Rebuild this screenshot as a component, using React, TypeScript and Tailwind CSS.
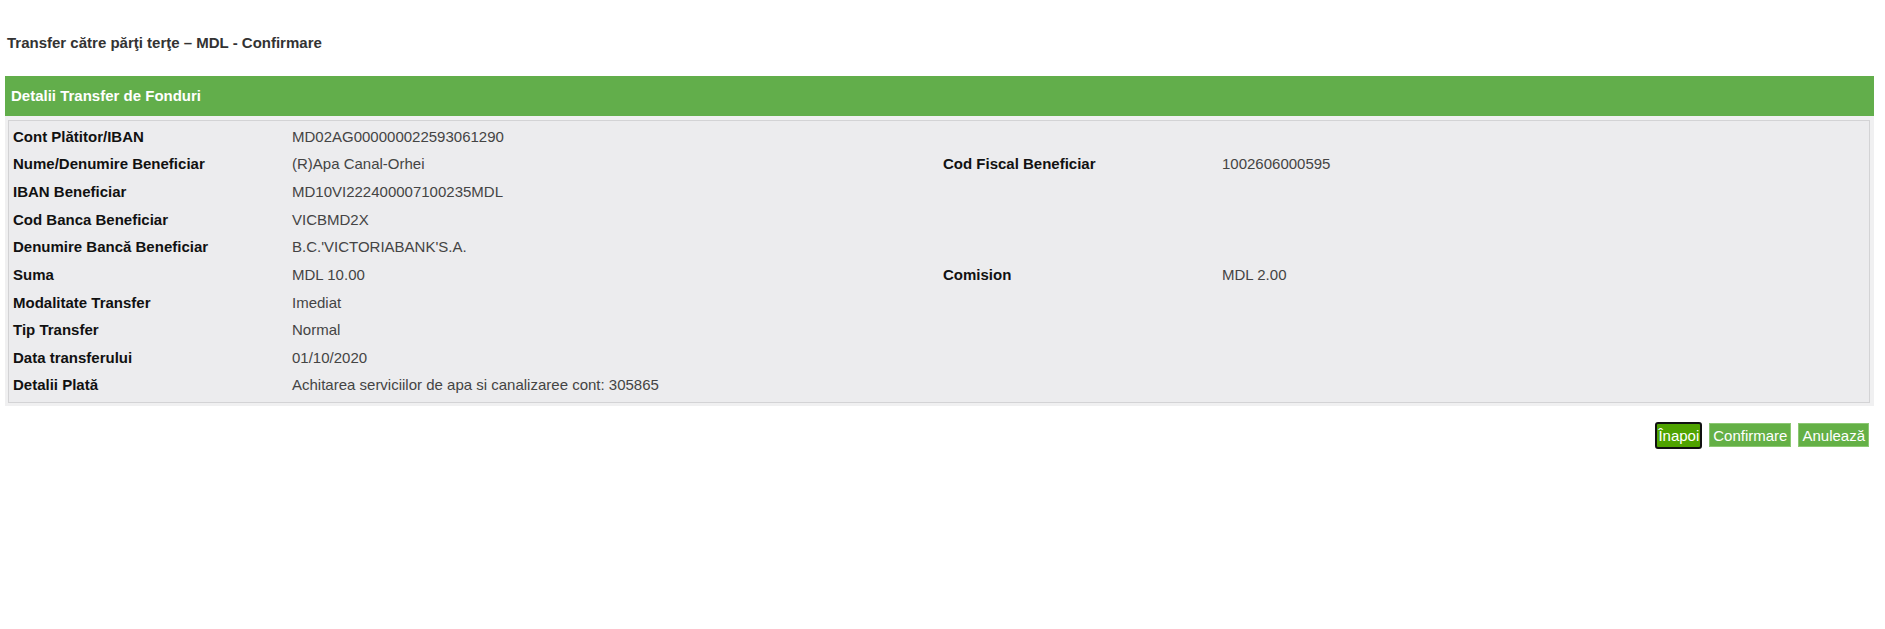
import React from "react";

const rows: [string, string, string?, string?][] = [
  ["Cont Plătitor/IBAN", "MD02AG000000022593061290"],
  ["Nume/Denumire Beneficiar", "(R)Apa Canal-Orhei", "Cod Fiscal Beneficiar", "1002606000595"],
  ["IBAN Beneficiar", "MD10VI222400007100235MDL"],
  ["Cod Banca Beneficiar", "VICBMD2X"],
  ["Denumire Bancă Beneficiar", "B.C.'VICTORIABANK'S.A."],
  ["Suma", "MDL 10.00", "Comision", "MDL 2.00"],
  ["Modalitate Transfer", "Imediat"],
  ["Tip Transfer", "Normal"],
  ["Data transferului", "01/10/2020"],
  ["Detalii Plată", "Achitarea serviciilor de apa si canalizaree cont: 305865"],
];

export default function App() {
  return (
    <div className="min-h-[629px] w-full bg-white font-['Liberation_Sans',Arial,sans-serif] text-[15px]">
      <div className="ml-[5px] mr-[11px] pt-[34px]">
        <div className="pl-[2px] h-[18px] leading-[18px] font-bold text-[15px] text-[#333333]">
          Transfer către părţi terţe – MDL - Confirmare
        </div>
        <div className="mt-[24px] h-[40px] bg-[#62ae4b] flex items-center pl-[6px] text-white font-bold text-[15px]">
          Detalii Transfer de Fonduri
        </div>
        <div className="bg-[#f0f0f1] pt-[4px] pb-[3px] pl-[3px] pr-[4px]">
          <div className="border border-[#d3d3d5] bg-[#ececee] py-[2px]">
            {rows.map(([l1, v1, l2, v2], i) => (
              <div key={i} className="grid grid-cols-[15%_35%_15%_35%] h-[27.66px] items-center">
                <div className="pl-[4px] font-bold text-[#111111] whitespace-nowrap">{l1}</div>
                <div className="pl-[4px] text-[#444444] whitespace-nowrap">{v1}</div>
                <div className="pl-[4px] font-bold text-[#111111] whitespace-nowrap">{l2 ?? ""}</div>
                <div className="pl-[4px] text-[#444444] whitespace-nowrap">{v2 ?? ""}</div>
              </div>
            ))}
          </div>
        </div>
        <div className="flex justify-end items-center gap-[7px] mt-[16px] pr-[5px]">
          <button className="h-[27px] px-[1px] rounded-[3px] border-2 border-[#111111] bg-[#4fa300] text-white text-[15px] leading-none">
            Înapoi
          </button>
          <button className="h-[24px] px-[3px] border border-[#8cc873] bg-[#64b046] text-white text-[15px] leading-none">
            Confirmare
          </button>
          <button className="h-[24px] px-[3px] border border-[#8cc873] bg-[#64b046] text-white text-[15px] leading-none">
            Anulează
          </button>
        </div>
      </div>
    </div>
  );
}
